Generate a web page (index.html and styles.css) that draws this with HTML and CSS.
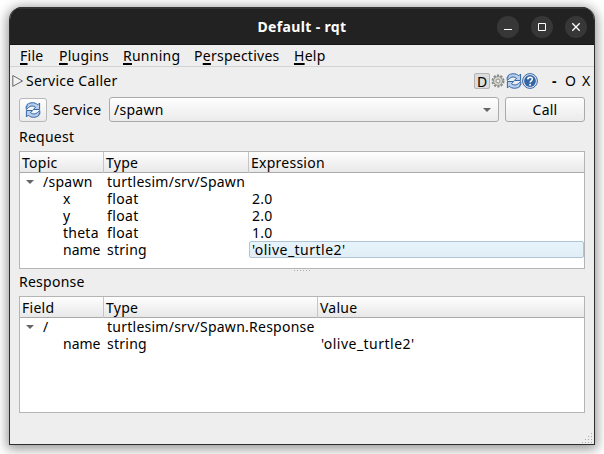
FILE: index.html
```html
<!DOCTYPE html>
<html lang="en">
<head>
<meta charset="utf-8">
<title>Default - rqt</title>
<link rel="stylesheet" href="styles.css">
</head>
<body>
<svg class="defs" width="0" height="0">
  <defs>
    <symbol id="refresh" viewBox="0 0 16 16">
      <path d="M2 4.500V2.600C5 .2 10 0 12.800 2.800L14.600 1v6.500H8.300l2.200-2.200C8.500 3.500 5.500 3.500 3.500 5.500L1.200 7.500V4z" fill="#b7cfec" stroke="#3465a4" stroke-linejoin="round"/>
      <path d="M14 11.500v1.900C11 15.800 6 16 3.200 13.200L1.400 15V8.500h6.300l-2.200 2.200c2 1.800 5 1.800 7-.2l2.300-2V12z" fill="#b7cfec" stroke="#3465a4" stroke-linejoin="round"/>
    </symbol>
  </defs>
</svg>
<main class="window">
  <header class="titlebar">
    <h1 class="title">Default - rqt</h1>
    <div class="controls">
      <span class="control"><svg width="22" height="22"><path d="M7 13.500h8" stroke="#fff"/></svg></span>
      <span class="control"><svg width="22" height="22"><path d="M7.500 7.500h7v7h-7z" stroke="#fff" fill="none"/></svg></span>
      <span class="control"><svg width="22" height="22"><path d="M7.300 7.300l7.400 7.400M14.700 7.300l-7.400 7.400" stroke="#fff" stroke-width="1.300"/></svg></span>
    </div>
  </header>
  <nav class="menubar">
    <span class="menu file"><u>F</u>ile</span>
    <span class="menu plugins"><u>P</u>lugins</span>
    <span class="menu running"><u>R</u>unning</span>
    <span class="menu perspectives">P<u>e</u>rspectives</span>
    <span class="menu help"><u>H</u>elp</span>
  </nav>
  <div class="dockbar">
    <svg class="dock-icon" width="12" height="14"><path d="M.8 1.500v10.800L10.500 7z" fill="#f4f4f4" stroke="#666"/></svg>
    <span class="dock-title">Service Caller</span>
    <div class="tools">
      <span class="tool-d">D</span>
      <svg class="gear" width="14" height="14" viewBox="0 0 14 14">
        <circle cx="7" cy="7" r="5.600" fill="none" stroke="#888a85" stroke-width="1.800" stroke-dasharray="2.200 1.320"/>
        <circle cx="7" cy="7" r="4.500" fill="#d3d7cf" stroke="#888a85" stroke-width=".9"/>
        <circle cx="7" cy="7" r="2" fill="#eee" stroke="#888a85" stroke-width=".9"/>
      </svg>
      <svg class="reload" width="16" height="16"><use href="#refresh"/></svg>
      <svg class="about" width="16" height="16" viewBox="0 0 16 16">
        <circle cx="8" cy="8" r="7.400" fill="#e4ecf5" stroke="#3465a4"/>
        <circle cx="8" cy="8" r="5.900" fill="#3465a4"/>
        <path d="M5.700 6.400C5.800 3.500 10.400 3.500 10.300 6.200 10.200 7.800 8.100 7.800 8.100 9.600" fill="none" stroke="#fff" stroke-width="1.600"/>
        <circle cx="8.100" cy="11.700" r="1" fill="#fff"/>
      </svg>
      <span class="dock-min">-</span>
      <span class="dock-float">O</span>
      <span class="dock-close">X</span>
    </div>
  </div>
  <div class="service-row">
    <span class="button refresh-button"><svg width="16" height="16"><use href="#refresh"/></svg></span>
    <span class="service-label">Service</span>
    <span class="button combo"><span>/spawn</span><i class="arrow"></i></span>
    <span class="button call">Call</span>
  </div>
  <h2 class="section">Request</h2>
  <section class="tree request">
    <div class="row head"><span>Topic</span><span>Type</span><span>Expression</span></div>
    <div class="row"><span class="parent"><i class="arrow"></i><b>/spawn</b></span><span>turtlesim/srv/Spawn</span><span></span></div>
    <div class="row"><span class="child">x</span><span class="float">float</span><span>2.0</span></div>
    <div class="row"><span class="child">y</span><span class="float">float</span><span>2.0</span></div>
    <div class="row"><span class="child">theta</span><span class="float">float</span><span>1.0</span></div>
    <div class="row"><span class="child name">name</span><span>string</span><span class="selected turtle">'olive_turtle2'</span></div>
  </section>
  <div class="splitter"></div>
  <h2 class="section response-label">Response</h2>
  <section class="tree response">
    <div class="row head"><span>Field</span><span>Type</span><span>Value</span></div>
    <div class="row"><span class="parent"><i class="arrow"></i><b>/</b></span><span>turtlesim/srv/Spawn.Response</span><span></span></div>
    <div class="row"><span class="child name">name</span><span>string</span><span class="turtle">'olive_turtle2'</span></div>
  </section>
  <svg class="grip" width="11" height="11"><path d="M9 0h1v1h-1zM6 3h1v1h-1zM9 3h1v1h-1zM3 6h1v1h-1zM6 6h1v1h-1zM9 6h1v1h-1zM0 9h1v1h-1zM3 9h1v1h-1zM6 9h1v1h-1zM9 9h1v1h-1z" fill="#aaa"/></svg>
</main>
</body>
</html>
```
FILE: styles.css
```css
* { box-sizing: border-box; }
body {
  margin: 0;
  width: 604px;
  height: 454px;
  padding: 7px 9px 9px;
  overflow: hidden;
  background: #fff;
  color: #000;
  font: 14px/17px "Noto Sans", sans-serif;
  letter-spacing: .25px;
}
.defs { position: absolute; }
svg { display: block; flex: none; }
.window {
  width: 586px;
  height: 438px;
  border: 1px solid #2d2d2d;
  border-top: 0;
  border-radius: 13px 13px 0 0;
  background: #eee;
  box-shadow: 0 2px 12px 2px rgba(0, 0, 0, .42);
  overflow: hidden;
  display: flex;
  flex-direction: column;
}
.titlebar {
  flex: none;
  height: 38px;
  background: #222;
  border-top: 2px solid #343434;
  border-bottom: 1px solid #161616;
  display: grid;
  grid-template-columns: 1fr auto 1fr;
  align-items: center;
}
.title {
  grid-column: 2;
  margin: 0;
  color: #fff;
  font-size: 14px;
  font-weight: 700;
  letter-spacing: .35px;
}
.controls { display: flex; justify-content: flex-end; gap: 12px; padding-right: 7px; }
.control { width: 22px; height: 22px; border-radius: 50%; background: #373737; }
.menubar {
  flex: none;
  display: flex;
  height: 22px;
  padding-left: 10px;
  border-bottom: 1px solid #d3d3d3;
  line-height: 21px;
}
.menu { flex: none; white-space: nowrap; }
.menu u { text-decoration-thickness: 2px; text-underline-offset: 2px; text-decoration-skip-ink: none; }
.file { width: 39px; }
.plugins { width: 64px; }
.running { width: 71px; }
.perspectives { width: 100px; }
.dockbar { flex: none; display: flex; align-items: center; height: 27px; padding: 0 2px; }
.dock-icon { margin-right: 2px; }
.tools { display: flex; align-items: center; margin-left: auto; }
.tool-d {
  width: 16px;
  height: 16px;
  border: 1px solid #b4b4b4;
  border-radius: 2px;
  background: #dcdcdc;
  line-height: 15px;
  text-align: center;
  letter-spacing: 0;
}
.gear { margin: 0 1px 0 1px; }
.dock-min { margin-left: 14px; width: 13px; font-weight: 700; }
.dock-float { width: 17px; }
.dock-close { width: 10px; }
.service-row { flex: none; display: flex; align-items: center; height: 31px; padding: 0 9px; }
.button {
  display: flex;
  align-items: center;
  justify-content: center;
  height: 25px;
  border: 1px solid #aaa;
  border-radius: 3px;
  background: linear-gradient(#fefefe, #ebebeb);
}
.refresh-button { width: 28px; height: 24px; border-color: #b7b7b7; }
.service-label { width: 62px; padding-left: 6px; }
.combo { width: 390px; padding: 0 7px 0 4px; justify-content: space-between; }
.call { width: 80px; margin-left: 6px; }
.arrow { width: 0; height: 0; border: 4px solid transparent; border-top-color: #656565; border-bottom: 0; }
.section { flex: none; margin: 0; height: 26px; padding-left: 9px; font-size: 14px; font-weight: 400; line-height: 24px; }
.tree { flex: none; margin: 0 9px; width: 566px; border: 1px solid #b4b4b4; background: #fff; }
.request { height: 118px; }
.response { height: 117px; }
.row { display: grid; grid-template-columns: 84px 145px 1fr; height: 17px; white-space: nowrap; }
.response .row { grid-template-columns: 84px 214px 1fr; }
.row > span { padding-left: 3px; }
.row.head { height: 21px; line-height: 21px; border-bottom: 1px solid #aaa; background: linear-gradient(#fefefe, #e8e8e8); }
.row.head > span { padding-left: 2px; }
.row.head > span + span { border-left: 1px solid #c5c5c5; margin-left: -1px; padding-left: 2px; }
.row > .parent { display: flex; align-items: center; padding-left: 6px; }
.parent .arrow { margin-right: 9px; }
.parent b { font-weight: 400; }
.row > .child { padding-left: 43px; }
.row > .name { letter-spacing: 0; }
.float { letter-spacing: .4px; }
.turtle { letter-spacing: .48px; }
.row > .selected {
  height: 17px;
  border: 1px solid #afc5d6;
  border-radius: 2px;
  background: linear-gradient(#e7f4fc, #e2edf5);
  padding-left: 2px;
  line-height: 15px;
}
.splitter { flex: none; width: 17px; height: 1px; margin: 1px auto 0; background: repeating-linear-gradient(90deg, #aaa 0 1px, transparent 1px 3px); }
.response-label { height: 25px; line-height: 22px; }
.grip { margin: 20px 1px 0 auto; }
```
